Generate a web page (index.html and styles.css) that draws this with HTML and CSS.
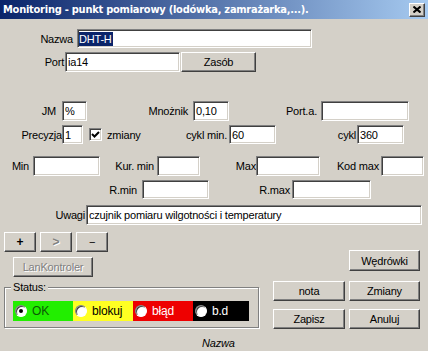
FILE: index.html
```html
<!DOCTYPE html>
<html lang="pl">
<head>
<meta charset="utf-8">
<title>Monitoring</title>
<link rel="stylesheet" href="styles.css">
</head>
<body>
<div class="win">
  <div class="titlebar">
    <span class="title">Monitoring - punkt pomiarowy (lodówka, zamrażarka,...).</span>
    <span class="close"><svg width="8" height="7" viewBox="0 0 8 7"><path d="M0.5 0.5 L7.5 6.5 M7.5 0.5 L0.5 6.5" stroke="#000" stroke-width="2" fill="none"/></svg></span>
  </div>
  <div class="form">
    <div class="row r1">
      <span class="lbl w77 pr4">Nazwa</span>
      <div class="edit w235"><span class="sel">DHT-H</span></div>
    </div>
    <div class="row r2">
      <span class="lbl w65 pr1">Port</span>
      <div class="edit w115">ia14</div>
      <div class="btn w75 ml1">Zasób</div>
    </div>
    <div class="row r3">
      <span class="lbl w62 pr6">JM</span>
      <div class="edit w25">%</div>
      <span class="lbl w106 pr5">Mnożnik</span>
      <div class="edit w36">0,10</div>
      <span class="lbl w92 pr4">Port.a.</span>
      <div class="edit w88"></div>
    </div>
    <div class="row r4">
      <span class="lbl w62 pr0">Precyzja</span>
      <div class="edit w21">1</div>
      <div class="mid">
        <span class="chk"><svg width="9" height="9" viewBox="0 0 9 9"><path d="M1 4 L3.5 6.5 L8 2" stroke="#000" stroke-width="2" fill="none"/></svg></span>
        <span class="chklbl">zmiany</span>
        <span class="lbl grow pr2">cykl min.</span>
      </div>
      <div class="edit w47">60</div>
      <span class="lbl w81 pr1">cykl</span>
      <div class="edit w47">360</div>
    </div>
    <div class="row r5">
      <span class="lbl w33 pr4">Min</span>
      <div class="edit w67"></div>
      <span class="lbl w57 pr3">Kur. min</span>
      <div class="edit w43"></div>
      <span class="lbl w56 pr0">Max</span>
      <div class="edit w64"></div>
      <span class="lbl w61 pr2">Kod max</span>
      <div class="edit w43"></div>
    </div>
    <div class="row r6">
      <span class="lbl w142 pr5">R.min</span>
      <div class="edit w67"></div>
      <span class="lbl w83 pr2">R.max</span>
      <div class="edit w79"></div>
    </div>
    <div class="row r7">
      <span class="lbl w86 pr1">Uwagi</span>
      <div class="edit w336">czujnik pomiaru wilgotności i temperatury</div>
    </div>
    <div class="lower">
      <div class="leftcol">
        <div class="smallbtns">
          <div class="btn sb bold">+</div>
          <div class="btn sb disabled bold">&gt;</div>
          <div class="btn sb">−</div>
        </div>
        <div class="btn lan disabled">LanKontroler</div>
        <div class="group">
          <span class="legend">Status:</span>
          <div class="cells">
            <div class="cell c-ok"><span class="radio on"></span><span class="rl">OK</span></div>
            <div class="cell c-blk"><span class="radio"></span><span class="rl">blokuj</span></div>
            <div class="cell c-err"><span class="radio"></span><span class="rl">błąd</span></div>
            <div class="cell c-bd"><span class="radio"></span><span class="rl">b.d</span></div>
          </div>
        </div>
        <div class="nazwa">Nazwa</div>
      </div>
      <div class="rightcol">
        <div class="btn w71 wedr">Wędrówki</div>
        <div class="btngrid">
          <div class="btn">nota</div>
          <div class="btn">Zmiany</div>
          <div class="btn">Zapisz</div>
          <div class="btn">Anuluj</div>
        </div>
      </div>
    </div>
  </div>
</div>
</body>
</html>
```
FILE: styles.css
```css
html, body {
  margin: 0;
  padding: 0;
}
body {
  width: 428px;
  height: 351px;
  overflow: hidden;
  background: #d4d0c8;
  font-family: "Liberation Sans", Arial, sans-serif;
  font-size: 11px;
  letter-spacing: -0.2px;
  color: #000;
}
.win {
  width: 428px;
  height: 351px;
  background: #d4d0c8;
}
.titlebar {
  height: 19px;
  display: flex;
  align-items: center;
  background: linear-gradient(to right, #0a246a, #a6caf0);
  padding-left: 3px;
}
.title {
  color: #fff;
  font-family: "DejaVu Sans Condensed", "DejaVu Sans", sans-serif;
  font-weight: bold;
  font-size: 11px;
  letter-spacing: -0.25px;
  white-space: nowrap;
}
.close {
  margin-left: auto;
  margin-right: 3px;
  width: 14px;
  height: 12px;
  background: #d4d0c8;
  border: 1px solid;
  border-color: #fff #404040 #404040 #fff;
  box-shadow: inset -1px -1px #808080;
  display: flex;
  align-items: center;
  justify-content: center;
}
.close svg { display: block; }

.form {
  display: flex;
  flex-direction: column;
}
.row {
  display: flex;
  align-items: center;
}
.r1 { margin-top: 10px; height: 19px; }
.r2 { margin-top: 4px; height: 20px; }
.r3 { margin-top: 29px; height: 20px; }
.r4 { margin-top: 4px; height: 19px; }
.r5 { margin-top: 12px; height: 20px; }
.r6 { margin-top: 4px; height: 19px; }
.r7 { margin-top: 6px; height: 20px; }

.lbl {
  display: block;
  text-align: right;
  white-space: nowrap;
  flex: none;
}
.grow { flex: 1; }
.pr0 { padding-right: 0; }
.pr1 { padding-right: 1px; }
.pr2 { padding-right: 2px; }
.pr3 { padding-right: 3px; }
.pr4 { padding-right: 4px; }
.pr5 { padding-right: 5px; }
.pr6 { padding-right: 6px; }
.ml1 { margin-left: 1px; }

.lbl, .edit, .btn { box-sizing: border-box; }
.w21 { width: 21px; }
.w25 { width: 25px; }
.w33 { width: 33px; }
.w36 { width: 36px; }
.w43 { width: 43px; }
.w47 { width: 47px; }
.w56 { width: 56px; }
.w57 { width: 57px; }
.w61 { width: 61px; }
.w62 { width: 62px; }
.w64 { width: 64px; }
.w65 { width: 65px; }
.w67 { width: 67px; }
.w71 { width: 71px; }
.w75 { width: 75px; }
.w77 { width: 77px; }
.w79 { width: 79px; }
.w81 { width: 81px; }
.w83 { width: 83px; }
.w86 { width: 86px; }
.w88 { width: 88px; }
.w92 { width: 92px; }
.w106 { width: 106px; }
.w115 { width: 115px; }
.w142 { width: 142px; }
.w235 { width: 235px; }
.w336 { width: 336px; }

.edit {
  flex: none;
  height: 100%;
  background: #fff;
  border: 1px solid;
  border-color: #808080 #fff #fff #808080;
  box-shadow: inset 1px 1px #404040, inset -1px -1px #d4d0c8;
  padding-left: 2px;
  display: flex;
  align-items: center;
  white-space: nowrap;
  overflow: hidden;
}
.sel {
  background: #0a246a;
  color: #fff;
  padding: 1px 1px 1px 0;
  margin-left: -1px;
}

.btn {
  flex: none;
  height: 20px;
  background: #d4d0c8;
  border: 1px solid;
  border-color: #fff #404040 #404040 #fff;
  box-shadow: inset -1px -1px #808080;
  display: flex;
  align-items: center;
  justify-content: center;
  white-space: nowrap;
}
.disabled {
  color: #808080;
  text-shadow: 1px 1px #fff;
}
.bold { font-weight: bold; font-size: 12px; }

.mid {
  width: 146px;
  flex: none;
  display: flex;
  align-items: center;
}
.chk {
  margin-left: 6px;
  width: 13px;
  height: 13px;
  box-sizing: border-box;
  background: #fff;
  border: 1px solid;
  border-color: #808080 #fff #fff #808080;
  box-shadow: inset 1px 1px #404040, inset -1px -1px #d4d0c8;
  display: flex;
  align-items: center;
  justify-content: center;
}
.chk svg { display: block; }
.chklbl { margin-left: 5px; }

.lower {
  display: flex;
  margin-top: 7px;
}
.leftcol {
  width: 255px;
  padding-left: 4px;
  display: flex;
  flex-direction: column;
}
.smallbtns {
  display: flex;
  gap: 4px;
}
.sb { width: 32px; }
.lan {
  width: 80px;
  margin-left: 9px;
  margin-top: 5px;
}
.group {
  position: relative;
  margin-top: 10px;
  border: 1px solid #808080;
  box-shadow: inset 1px 1px #fff, 1px 1px #fff;
  padding: 13px 0 0 8px;
  box-sizing: border-box;
  height: 41px;
}
.legend {
  position: absolute;
  left: 6px;
  top: -7px;
  padding: 0 2px;
  background: #d4d0c8;
  line-height: 13px;
}
.cells {
  display: flex;
  height: 20px;
}
.cell {
  width: 60px;
  height: 20px;
  display: flex;
  align-items: center;
  font-size: 12px;
}
.cell.c-bd { width: 56px; }
.c-ok { background: #22ee00; color: #0c5a06; }
.c-blk { background: #ffff22; color: #000; }
.c-err { background: #ee0000; color: #fff; }
.c-bd { background: #000; color: #fff; }
.radio {
  position: relative;
  margin-left: 2px;
  width: 12px;
  height: 12px;
  box-sizing: border-box;
  border-radius: 50%;
  background: #fff;
  border: 1px solid;
  border-color: #808080 #fff #fff #808080;
  box-shadow: inset 1px 1px #404040;
}
.radio.on::after {
  content: "";
  position: absolute;
  left: 3px;
  top: 3px;
  width: 4px;
  height: 4px;
  border-radius: 50%;
  background: #000;
}
.rl { margin-left: 5px; }
.nazwa {
  margin-top: 9px;
  margin-left: 198px;
  font-style: italic;
  line-height: 13px;
}
.rightcol {
  margin-left: 14px;
  margin-top: 18px;
  width: 146px;
  display: flex;
  flex-direction: column;
}
.wedr {
  margin-left: 76px;
  height: 21px;
}
.btngrid {
  margin-top: 10px;
  display: grid;
  grid-template-columns: 72px 71px;
  column-gap: 4px;
  row-gap: 8px;
}
.btngrid .btn { height: 20px; }
```
